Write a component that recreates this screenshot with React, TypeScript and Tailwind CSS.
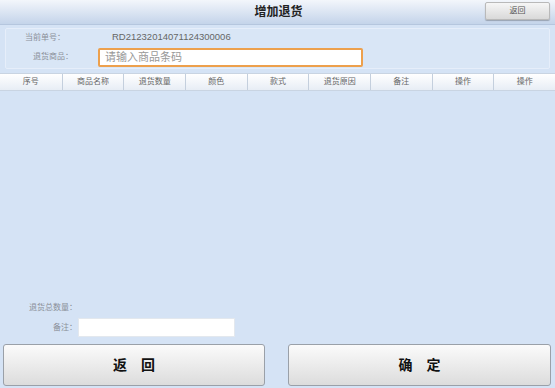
const cols = ["序号", "商品名称", "退货数量", "颜色", "款式", "退货原因", "备注", "操作", "操作"];

export default function App() {
  return (
    <div
      className="w-[555px] h-[388px] bg-[#d5e3f5] flex flex-col overflow-hidden text-[#555]"
      style={{ fontFamily: '"Liberation Sans", "Noto Sans CJK SC", sans-serif' }}
    >
      {/* 标题栏 */}
      <div className="h-[25px] shrink-0 flex items-center bg-gradient-to-b from-[#f3f6fb] to-[#c4d4ea] border-b border-[#b5c6de] relative">
        <div className="flex-1 text-center text-[12px] font-bold text-[#222] pl-[2px]">增加退货</div>
        <button className="absolute right-[5px] top-[2px] w-[65px] h-[18px] rounded-[2px] border border-[#b9b9b9] bg-gradient-to-b from-[#f6f6f6] to-[#d9d9d9] text-[8px] text-[#555] shadow-[0_1px_1px_rgba(0,0,0,0.25)]">
          返回
        </button>
      </div>

      {/* 单号信息 */}
      <div className="mx-[5px] mt-[3px] h-[41px] shrink-0 border border-[#e6eefa] rounded-[2px] bg-[#d9e6f6] flex flex-col justify-center gap-[3px] text-[8px]">
        <div className="flex items-center h-[14px]">
          <span className="w-[106px] pl-[19px] text-[#8a8f98]">当前单号：</span>
          <span className="text-[#666] text-[9.5px]">RD21232014071124300006</span>
        </div>
        <div className="flex items-center">
          <span className="w-[92px] pl-[27px] text-[#8a8f98]">退货商品：</span>
          <div className="w-[265px] h-[19px] border-2 border-[#eda04c] rounded-[2px] bg-white flex items-center pl-[5px] text-[11px] text-[#999]">
            请输入商品条码
          </div>
        </div>
      </div>

      {/* 表头 */}
      <div className="mt-[4px] h-[18px] shrink-0 grid grid-cols-9 border-y border-[#c9d4e2]">
        {cols.map((c, i) => (
          <div
            key={i}
            className="flex items-center justify-center bg-gradient-to-b from-[#ffffff] to-[#e7edf5] border-l border-[#c4cfdd] first:border-l-0 text-[8px] text-[#666]"
          >
            {c}
          </div>
        ))}
      </div>

      {/* 列表区域 */}
      <div className="flex-1" />

      {/* 汇总 */}
      <div className="shrink-0 text-[8px] text-[#8a8f98]">
        <div className="pl-[29px] h-[14px] flex items-center">退货总数量：</div>
        <div className="flex items-center mt-[3px] h-[19px]">
          <span className="w-[78px] text-right pr-[1px]">备注：</span>
          <div className="w-[157px] h-[19px] bg-white border border-[#e3e8ee]" />
        </div>
      </div>

      {/* 按钮 */}
      <div className="shrink-0 flex justify-between pl-[3px] pr-[4px] pt-[7px] pb-[2px]">
        <button className="w-[262px] h-[42px] rounded-[3px] border border-[#9aa0a8] bg-gradient-to-b from-[#fbfbfb] to-[#dcdcdc] text-[14px] font-bold text-[#111] tracking-[14px] pl-[14px]">
          返回
        </button>
        <button className="w-[263px] h-[42px] rounded-[3px] border border-[#9aa0a8] bg-gradient-to-b from-[#fbfbfb] to-[#dcdcdc] text-[14px] font-bold text-[#111] tracking-[14px] pl-[14px]">
          确定
        </button>
      </div>
    </div>
  );
}
